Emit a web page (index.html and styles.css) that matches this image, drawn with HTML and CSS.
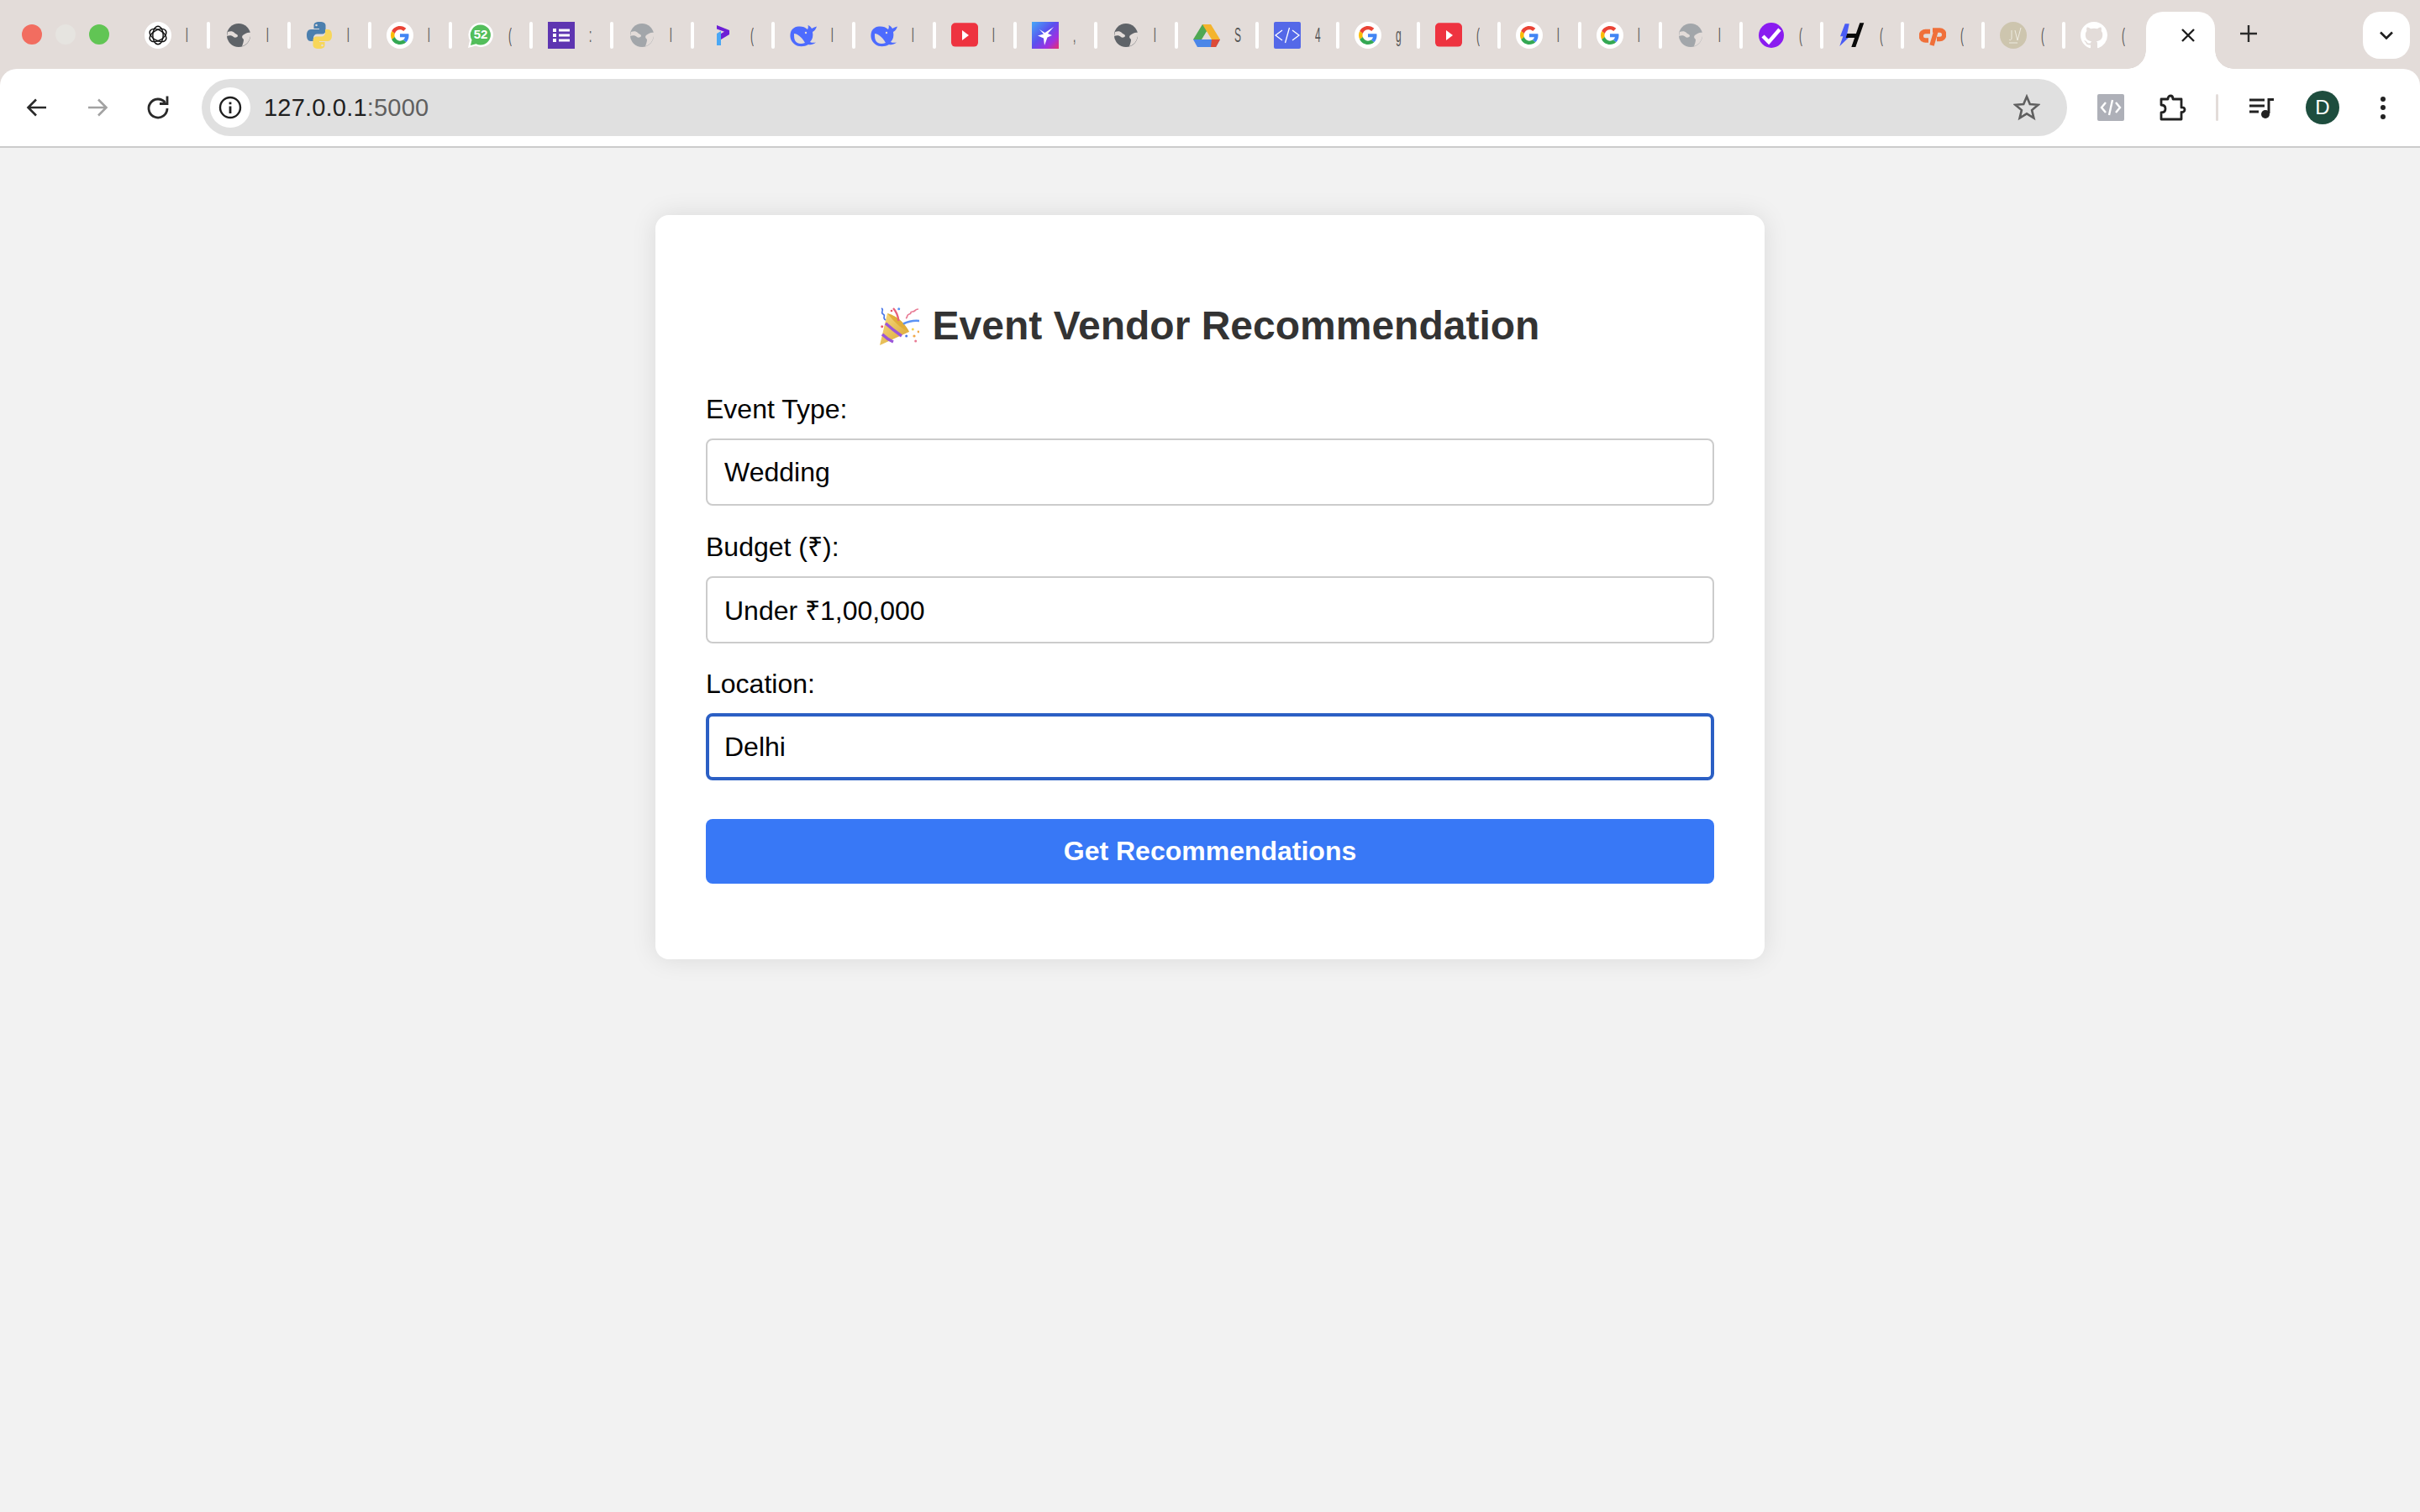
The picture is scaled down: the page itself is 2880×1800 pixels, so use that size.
FILE: index.html
```html
<!DOCTYPE html>
<html lang="en">
<head>
<meta charset="utf-8">
<title>Event Vendor Recommendation</title>
<link rel="stylesheet" href="styles.css">
</head>
<body>
<svg class="defs" aria-hidden="true">
  <defs>
    <linearGradient id="starbg" x1="0" y1="0" x2="1" y2="1"><stop offset="0" stop-color="#45a8f8"/><stop offset=".45" stop-color="#5a50ee"/><stop offset=".75" stop-color="#a02fe0"/><stop offset="1" stop-color="#e8306a"/></linearGradient>
    <linearGradient id="cone" x1="0" y1="0" x2="1" y2="1"><stop offset="0" stop-color="#f8dc80"/><stop offset="1" stop-color="#d8a332"/></linearGradient>
    <symbol id="i-openai" viewBox="0 0 32 32">
      <circle cx="16" cy="16" r="16" fill="#fff"/>
      <g fill="none" stroke="#111" stroke-width="1.400">
        <ellipse cx="16" cy="16" rx="6.200" ry="10.800"/>
        <ellipse cx="16" cy="16" rx="6.200" ry="10.800" transform="rotate(60 16 16)"/>
        <ellipse cx="16" cy="16" rx="6.200" ry="10.800" transform="rotate(120 16 16)"/>
      </g>
    </symbol>
    <symbol id="i-globe" viewBox="0 0 32 32">
      <circle cx="16" cy="16" r="14" fill="currentColor"/>
      <path d="M3 12C6 11 9 11 11 13C12 15 15 14 15 17C14 19 11 19 10 18C8 16 5 16 2 17z" fill="#e3dcd9"/>
      <path d="M30 13C27 12 24 14 21 16C19 18 21 20 22 21C22 24 21 26 20 29C25 28 29 23 30 17z" fill="#e3dcd9"/>
    </symbol>
    <symbol id="i-python" viewBox="0 0 32 32">
      <path d="M16 0c-6 0-6.500 2.500-6.500 4.500V8H16v1H6C2.500 9 1 12 1 16s1.500 7 4.500 7H9v-4c0-2.500 2-4.500 4.500-4.500h6c2.500 0 4-2 4-4V4.500C23.500 2 22 0 16 0z" fill="#4b7fae"/>
      <circle cx="12.500" cy="4" r="1.300" fill="#e3dcd9"/>
      <path d="M16 32c6 0 6.500-2.500 6.500-4.500V24H16v-1h10c3.500 0 5-3 5-7s-1.500-7-4.500-7H23v4c0 2.500-2 4.500-4.500 4.500h-6c-2.500 0-4 2-4 4v6C8.500 30 10 32 16 32z" fill="#f7d65a"/>
      <circle cx="19.500" cy="28" r="1.300" fill="#e3dcd9"/>
    </symbol>
    <symbol id="i-google" viewBox="0 0 32 32">
      <circle cx="16" cy="16" r="16" fill="#fff"/>
      <g transform="translate(5 5) scale(.458)">
        <path fill="#EA4335" d="M24 9.500c3.540 0 6.710 1.220 9.210 3.600l6.850-6.850C35.900 2.380 30.470 0 24 0 14.620 0 6.510 5.380 2.560 13.220l7.980 6.190C12.430 13.720 17.740 9.500 24 9.500z"/>
        <path fill="#4285F4" d="M46.980 24.550c0-1.570-.15-3.090-.38-4.550H24v9.020h12.940c-.58 2.960-2.260 5.480-4.780 7.180l7.730 6c4.510-4.180 7.090-10.360 7.090-17.650z"/>
        <path fill="#FBBC05" d="M10.530 28.590c-.48-1.450-.76-2.990-.76-4.590s.27-3.140.76-4.590l-7.980-6.190C.92 16.460 0 20.120 0 24c0 3.880.92 7.540 2.560 10.780l7.970-6.190z"/>
        <path fill="#34A853" d="M24 48c6.480 0 11.930-2.130 15.890-5.810l-7.730-6c-2.150 1.450-4.920 2.300-8.160 2.300-6.260 0-11.570-4.220-13.470-9.910l-7.980 6.190C6.510 42.620 14.620 48 24 48z"/>
      </g>
    </symbol>
    <symbol id="i-whatsapp" viewBox="0 0 32 32">
      <path d="M16 1a14.500 14.500 0 0 0-13 21L1 31l9-2.500A14.500 14.500 0 1 0 16 1z" fill="#fff"/>
      <path d="M16 3.500a12 12 0 0 0-10.500 18L4 28l6.500-1.800A12 12 0 1 0 16 3.500z" fill="#53be5b"/>
      <text x="16" y="20" class="wa-num">52</text>
    </symbol>
    <symbol id="i-forms" viewBox="0 0 32 32">
      <rect width="32" height="32" fill="#5e35b1"/>
      <path d="M6 8h4v4H6zM13 8.500h13v3H13zM6 14h4v4H6zM13 14.500h13v3H13zM6 20h4v4H6zM13 20.500h13v3H13z" fill="#fff"/>
    </symbol>
    <symbol id="i-p" viewBox="0 0 32 32">
      <path d="M9 14l5-3v17H9z" fill="#4aa8f5"/>
      <path d="M9 4l15 6v5l-10 6v-7l4-2.200L9 8.500z" fill="#6c1fd6"/>
    </symbol>
    <symbol id="i-whale" viewBox="0 0 32 32">
      <path d="M.5 15C1 9 5 6 10 5.500C14 5 18 6 21 9C22 7 22 6 21.500 4C24 5 25 6 26 8C28 7 30 6 32 5.500C31 9 29 11 27 12C28 17 27 21 24 24C26 25 29 25 31 24.500C28 27 25 27.500 22 27C17 30 10 30 6 27C2 24 0 20 .5 15z" fill="#4d6bfe"/>
      <path d="M5 14C9 14 14 18 18 25C13 27 8 26 6 22C5 20 5 17 5 14z" fill="#e3dcd9"/>
      <circle cx="19" cy="13" r="1.200" fill="#e3dcd9"/>
    </symbol>
    <symbol id="i-youtube" viewBox="0 0 32 32">
      <rect y="3" width="32" height="30" rx="5" transform="translate(0 -1.500) scale(1 .94)" fill="#ee3340"/>
      <path d="M13 10l8 6-8 6z" fill="#fff"/>
    </symbol>
    <symbol id="i-spark" viewBox="0 0 32 32">
      <rect width="32" height="32" fill="url(#starbg)"/>
      <path d="M26 6l-7 8 5 2-5.500 2.500L15 28l-1-8.500-7-3 7-2L9 9l6.500 4z" fill="#fff"/>
    </symbol>
    <symbol id="i-drive" viewBox="0 0 32 32">
      <path d="M11 3h10L10 21 0 21z" fill="#4fa853"/>
      <path d="M21 3l11 18H22L11 3z" fill="#f4b42d"/>
      <path d="M0 21h32l-5 9H5z" fill="#4a86e8"/>
      <path d="M22 21h10l-5 9h-6z" fill="#dd4b37"/>
    </symbol>
    <symbol id="i-code" viewBox="0 0 32 32">
      <rect width="32" height="32" rx="2" fill="#5468e8"/>
      <path d="M10 10l-8 6 8 6M22 10l8 6-8 6M18.500 7l-5 18" fill="none" stroke="#fff" stroke-width="1.300"/>
    </symbol>
    <symbol id="i-check" viewBox="0 0 32 32">
      <circle cx="16" cy="16" r="15" fill="#8a1cf0"/>
      <path d="M6 17l7 7L26 9" fill="none" stroke="#fff" stroke-width="4.500"/>
    </symbol>
    <symbol id="i-h" viewBox="0 0 32 32">
      <path d="M7.700 2.300h5l-2.400 11.700H17L1.300 29l4-11.700H2z" fill="#4a5cf5"/>
      <path d="M25.300 1.300h5L20.300 30h-5zM10.300 14h13.400L22 19H8.700z" fill="#0a0a0a"/>
    </symbol>
    <symbol id="i-cp" viewBox="0 0 32 32">
      <path d="M13 11.500H7.500a5 5 0 0 0 0 10.500H11" fill="none" stroke="#f0703a" stroke-width="5.500"/>
      <path d="M16 10h8.500a5 5 0 0 1 0 10.500h-3.500M20 11L15 28" fill="none" stroke="#f0703a" stroke-width="5.500"/>
    </symbol>
    <symbol id="i-jv" viewBox="0 0 32 32">
      <circle cx="16" cy="16" r="16" fill="#cdc5ae"/>
      <path d="M14 10v9c0 3-2 3-3 2M18 10l3 12 4-15M11 25h10" fill="none" stroke="#f2efe6" stroke-width=".9"/>
    </symbol>
    <symbol id="i-github" viewBox="0 0 16 16">
      <path fill="#fff" d="M8 0C3.580 0 0 3.580 0 8c0 3.540 2.290 6.530 5.470 7.590.4.07.55-.17.55-.38 0-.19-.01-.82-.01-1.490-2.010.37-2.530-.49-2.690-.94-.09-.23-.48-.94-.82-1.130-.28-.15-.68-.52-.01-.53.63-.01 1.080.58 1.230.82.72 1.210 1.870.87 2.330.66.07-.52.28-.87.51-1.070-1.780-.2-3.640-.89-3.640-3.950 0-.87.31-1.590.82-2.150-.08-.2-.36-1.020.08-2.120 0 0 .67-.21 2.200.82.64-.18 1.320-.27 2-.27.68 0 1.360.09 2 .27 1.530-1.040 2.200-.82 2.200-.82.44 1.100.16 1.920.08 2.120.51.56.82 1.270.82 2.150 0 3.070-1.870 3.750-3.650 3.950.29.25.54.73.54 1.480 0 1.070-.01 1.930-.01 2.200 0 .21.15.46.55.38A8.013 8.013 0 0 0 16 8c0-4.420-3.580-8-8-8z"/>
    </symbol>
  </defs>
</svg>

<header class="browser">
  <div class="tabstrip">
    <div class="lights">
      <span class="light light-red"></span>
      <span class="light light-idle"></span>
      <span class="light light-green"></span>
    </div>
    <div class="tabs">
      <div class="tab"><svg class="fav"><use href="#i-openai"/></svg><span class="tab-title">l</span><span class="sep"></span></div>
      <div class="tab"><svg class="fav globe-dark"><use href="#i-globe"/></svg><span class="tab-title">l</span><span class="sep"></span></div>
      <div class="tab"><svg class="fav"><use href="#i-python"/></svg><span class="tab-title">l</span><span class="sep"></span></div>
      <div class="tab"><svg class="fav"><use href="#i-google"/></svg><span class="tab-title">l</span><span class="sep"></span></div>
      <div class="tab"><svg class="fav"><use href="#i-whatsapp"/></svg><span class="tab-title">(</span><span class="sep"></span></div>
      <div class="tab"><svg class="fav"><use href="#i-forms"/></svg><span class="tab-title">:</span><span class="sep"></span></div>
      <div class="tab"><svg class="fav globe-light"><use href="#i-globe"/></svg><span class="tab-title">l</span><span class="sep"></span></div>
      <div class="tab"><svg class="fav"><use href="#i-p"/></svg><span class="tab-title">(</span><span class="sep"></span></div>
      <div class="tab"><svg class="fav"><use href="#i-whale"/></svg><span class="tab-title">l</span><span class="sep"></span></div>
      <div class="tab"><svg class="fav"><use href="#i-whale"/></svg><span class="tab-title">l</span><span class="sep"></span></div>
      <div class="tab"><svg class="fav"><use href="#i-youtube"/></svg><span class="tab-title">l</span><span class="sep"></span></div>
      <div class="tab"><svg class="fav"><use href="#i-spark"/></svg><span class="tab-title">,</span><span class="sep"></span></div>
      <div class="tab"><svg class="fav globe-dark"><use href="#i-globe"/></svg><span class="tab-title">l</span><span class="sep"></span></div>
      <div class="tab"><svg class="fav"><use href="#i-drive"/></svg><span class="tab-title">S</span><span class="sep"></span></div>
      <div class="tab"><svg class="fav"><use href="#i-code"/></svg><span class="tab-title">4</span><span class="sep"></span></div>
      <div class="tab"><svg class="fav"><use href="#i-google"/></svg><span class="tab-title">g</span><span class="sep"></span></div>
      <div class="tab"><svg class="fav"><use href="#i-youtube"/></svg><span class="tab-title">(</span><span class="sep"></span></div>
      <div class="tab"><svg class="fav"><use href="#i-google"/></svg><span class="tab-title">l</span><span class="sep"></span></div>
      <div class="tab"><svg class="fav"><use href="#i-google"/></svg><span class="tab-title">l</span><span class="sep"></span></div>
      <div class="tab"><svg class="fav globe-light"><use href="#i-globe"/></svg><span class="tab-title">l</span><span class="sep"></span></div>
      <div class="tab"><svg class="fav"><use href="#i-check"/></svg><span class="tab-title">(</span><span class="sep"></span></div>
      <div class="tab"><svg class="fav"><use href="#i-h"/></svg><span class="tab-title">(</span><span class="sep"></span></div>
      <div class="tab"><svg class="fav"><use href="#i-cp"/></svg><span class="tab-title">(</span><span class="sep"></span></div>
      <div class="tab"><svg class="fav"><use href="#i-jv"/></svg><span class="tab-title">(</span><span class="sep"></span></div>
      <div class="tab tab-last"><svg class="fav"><use href="#i-github"/></svg><span class="tab-title">(</span></div>
    </div>
    <div class="tab-active">
      <svg class="close-icon" viewBox="0 0 16 16"><path d="M1 1l14 14M15 1L1 15" fill="none" stroke="#1f1f1f" stroke-width="2.400"/></svg>
    </div>
    <svg class="plus-icon" viewBox="0 0 20 20"><path d="M10 0v20M0 10h20" fill="none" stroke="#2a2a2a" stroke-width="2.400"/></svg>
    <div class="tab-search">
      <svg class="chevron-icon" viewBox="0 0 16 10"><path d="M1 1.500l7 7 7-7" fill="none" stroke="#1f1f1f" stroke-width="2.600"/></svg>
    </div>
  </div>

  <div class="toolbar">
    <svg class="tool" viewBox="0 0 32 32"><path d="M27 16H6M15 6.500L5.500 16l9.500 9.500" fill="none" stroke="#2a2a2a" stroke-width="2.600"/></svg>
    <svg class="tool" viewBox="0 0 32 32"><path d="M5 16h21M17 6.500l9.500 9.500-9.500 9.500" fill="none" stroke="#a2a2a2" stroke-width="2.600"/></svg>
    <svg class="tool" viewBox="0 0 32 32"><path d="M24.500 10a11 11 0 1 0 2.500 7" fill="none" stroke="#2a2a2a" stroke-width="2.800"/><path d="M18 11.500h9v-9" fill="none" stroke="#2a2a2a" stroke-width="2.800"/></svg>
    <div class="omnibox">
      <span class="site-info">
        <svg class="info-icon" viewBox="0 0 28 28"><circle cx="14" cy="14" r="12" fill="none" stroke="#1f1f1f" stroke-width="2.400"/><path d="M12.600 12.500h2.800V21h-2.800zM12.600 7.500h2.800v2.800h-2.800z" fill="#1f1f1f"/></svg>
      </span>
      <span class="url">127.0.0.1<span class="url-port">:5000</span></span>
      <svg class="star-icon" viewBox="0 0 32 32"><path d="M16 3l3.800 9 9.700.8-7.400 6.300 2.300 9.500L16 23.400l-8.400 5.200 2.300-9.500-7.400-6.300 9.700-.8z" fill="none" stroke="#5f5f5f" stroke-width="2.600"/></svg>
    </div>
    <svg class="tool ext-code" viewBox="0 0 32 32"><rect width="32" height="32" rx="2" fill="#aeb0b8"/><path d="M10 10l-5 6 5 6M22 10l5 6-5 6M18 7l-4 18" fill="none" stroke="#fff" stroke-width="2.400"/></svg>
    <svg class="tool ext-puzzle" viewBox="0 0 32 32"><path d="M2 6h8c0-2 1-4 3-4s3 2 3 4h10v10c2-.5 4 .5 4 2.500S28 22 26 21.500V30H2v-8c3 0 5-1.500 5-4.500S5 13 2 13z" fill="none" stroke="#222" stroke-width="2.800" stroke-linejoin="round"/></svg>
    <span class="tool-sep"></span>
    <svg class="tool ext-media" viewBox="0 0 32 32"><path d="M1 7h18M1 14h18M1 21h11" fill="none" stroke="#222" stroke-width="2.800"/><path d="M24 5v18" fill="none" stroke="#222" stroke-width="3"/><path d="M24 5h6v3h-6z" fill="#222"/><circle cx="20" cy="24" r="5" fill="#222"/></svg>
    <span class="avatar">D</span>
    <svg class="tool kebab" viewBox="0 0 32 32"><circle cx="16" cy="6" r="3" fill="#222"/><circle cx="16" cy="16" r="3" fill="#222"/><circle cx="16" cy="27" r="3" fill="#222"/></svg>
  </div>
</header>

<main class="page">
  <section class="card">
    <h1 class="title">
      <svg class="popper" viewBox="0 0 48 48">
        <path d="M1 47L10 9Q26 13 36 31z" fill="url(#cone)"/>
        <path d="M10 9Q27 14 36 31Q24 27 10 9z" fill="#e0ad3a"/>
        <path d="M8 21Q17 29 27 36" fill="none" stroke="#9a55d8" stroke-width="3.400"/>
        <path d="M4 34Q10 40 17 43" fill="none" stroke="#9a55d8" stroke-width="3.400"/>
        <path d="M29 21.500Q38 17 48.500 18" fill="none" stroke="#5a93f5" stroke-width="2.600"/>
        <path d="M17 3Q22 8 23.500 18" fill="none" stroke="#e8607a" stroke-width="2.400"/>
        <path d="M3 3c4 2-2 5 2 7s-2 4 3 7" fill="none" stroke="#4a77e8" stroke-width="1.600"/>
        <path d="M32 15c3-1 0-4 4-5s0-3 4-3 2-3 7-3" fill="none" stroke="#e87a94" stroke-width="1.700"/>
        <circle cx="23.700" cy="3.700" r="1.500" fill="#5a93f5"/>
        <circle cx="3.700" cy="24.700" r="1.500" fill="#e8556a"/>
        <circle cx="40.300" cy="28" r="1.500" fill="#f3d34f"/>
        <circle cx="47" cy="31" r="1.400" fill="#f0a94b"/>
        <circle cx="42" cy="36" r="1.600" fill="#f0a94b"/>
        <circle cx="32.700" cy="36" r="1.500" fill="#4a77e8"/>
        <circle cx="43.700" cy="42" r="1.500" fill="#e87a94"/>
        <circle cx="15" cy="6" r="1.300" fill="#e8556a"/>
      </svg>
      <span>Event Vendor Recommendation</span>
    </h1>
    <form class="form">
      <div class="field">
        <div class="label">Event Type:</div>
        <div class="input">Wedding</div>
      </div>
      <div class="field">
        <div class="label">Budget (₹):</div>
        <div class="input">Under ₹1,00,000</div>
      </div>
      <div class="field">
        <div class="label">Location:</div>
        <div class="input input-focus">Delhi</div>
      </div>
      <button class="submit" type="button">Get Recommendations</button>
    </form>
  </section>
</main>
</body>
</html>
```

FILE: styles.css
```css
* { box-sizing: border-box; }

html, body { margin: 0; padding: 0; }

body {
  min-height: 100vh;
  display: flex;
  flex-direction: column;
  background: #f2f2f2;
  font-family: "Liberation Sans", Arial, sans-serif;
  color: #000;
}

.defs { display: block; width: 0; height: 0; overflow: hidden; }

/* Browser chrome */
.browser { background: #e3dcd9; flex: none; }

.tabstrip { display: flex; height: 82px; }

.lights { display: flex; gap: 16px; padding: 29px 0 0 26px; }
.light { width: 24px; height: 24px; border-radius: 50%; }
.light-red { background: #f26d60; }
.light-idle { background: #e6e4e0; }
.light-green { background: #61c554; }

.tabs { display: flex; margin-left: 22px; padding-top: 26px; }

.tab {
  width: 96px;
  height: 32px;
  display: flex;
  align-items: center;
  padding-left: 20px;
}
.tab-last { width: 98px; }

.fav { width: 32px; height: 32px; flex: none; }
.globe-dark { color: #5f6368; }
.globe-light { color: #a2a6aa; }
.wa-num { font: bold 15px "Liberation Sans", sans-serif; fill: #fff; text-anchor: middle; }

.tab-title {
  width: 8px;
  margin-left: 17px;
  flex: none;
  font-size: 24px;
  line-height: 32px;
  color: #555;
  transform: scaleX(.5);
  transform-origin: left center;
}

.sep { width: 4px; height: 32px; margin-left: auto; margin-right: -2px; border-radius: 2px; background: #fff; }

.tab-active {
  position: relative;
  width: 82px;
  height: 68px;
  margin-top: 14px;
  display: flex;
  justify-content: flex-end;
  padding: 20px 24px 0 0;
  background: #fff;
  border-radius: 20px 20px 0 0;
}
.tab-active::before,
.tab-active::after {
  content: "";
  position: absolute;
  bottom: 0;
  width: 22px;
  height: 22px;
}
.tab-active::before { left: -22px; background: radial-gradient(circle at 0 0, transparent 21.5px, #fff 22px); }
.tab-active::after { right: -22px; background: radial-gradient(circle at 100% 0, transparent 21.5px, #fff 22px); }

.close-icon { width: 16px; height: 16px; }
.plus-icon { width: 20px; height: 20px; margin: 30px 0 0 30px; flex: none; }

.tab-search {
  width: 56px;
  height: 56px;
  margin: 14px 12px 0 auto;
  display: flex;
  align-items: center;
  justify-content: center;
  background: #fff;
  border-radius: 20px;
}
.chevron-icon { width: 16px; height: 10px; }

.toolbar {
  height: 94px;
  display: flex;
  align-items: center;
  padding: 0 28px;
  gap: 40px;
  background: #fff;
  border-bottom: 2px solid #ccc;
  border-radius: 20px 20px 0 0;
}

.tool { width: 32px; height: 32px; flex: none; }

.omnibox {
  flex: 1;
  height: 68px;
  margin: 0 -4px;
  display: flex;
  align-items: center;
  padding: 0 32px 0 10px;
  background: #e0e0e0;
  border-radius: 34px;
}
.site-info {
  width: 48px;
  height: 48px;
  flex: none;
  display: flex;
  align-items: center;
  justify-content: center;
  background: #fff;
  border-radius: 50%;
}
.info-icon { width: 28px; height: 28px; }
.url { margin-left: 16px; margin-right: auto; font: 29px "Liberation Sans", sans-serif; letter-spacing: .2px; color: #1f1f1f; }
.url-port { color: #5f5f5f; }
.star-icon { width: 32px; height: 32px; flex: none; }

.ext-puzzle { margin-left: 2px; }
.tool-sep { width: 3px; height: 32px; flex: none; margin: 0 -4px 0 -5px; background: #e3dcd9; border-radius: 2px; }
.ext-media { margin-right: -4px; }
.avatar {
  width: 40px;
  height: 40px;
  flex: none;
  margin-right: -4px;
  display: flex;
  align-items: center;
  justify-content: center;
  border-radius: 50%;
  background: #1e4d3e;
  color: #fff;
  font-size: 24px;
}

/* Page content */
.page { flex: 1; padding-top: 80px; display: flex; justify-content: center; align-items: flex-start; }

.card {
  width: 1320px;
  padding: 104px 60px 90px;
  background: #fff;
  border-radius: 16px;
  box-shadow: 0 0 30px rgba(0, 0, 0, .1);
}

.title {
  margin: 0 0 54px;
  padding-right: 2px;
  display: flex;
  align-items: center;
  justify-content: center;
  gap: 16px;
  height: 55px;
  font-size: 48px;
  font-weight: 700;
  color: #333;
}
.popper { width: 48px; height: 48px; flex: none; }

.form { display: flex; flex-direction: column; }

.field { margin-bottom: 30.5px; }
.field:last-of-type { margin-bottom: 46px; }

.label { font-size: 32px; line-height: 37px; margin-bottom: 16px; }

.input {
  height: 80px;
  display: flex;
  align-items: center;
  padding: 0 20px;
  border: 2px solid #ccc;
  border-radius: 8px;
  background: #fff;
  font-size: 32px;
}
.input-focus { border: 4px solid #2b5fc4; padding: 0 18px; }

.submit {
  height: 77px;
  display: block;
  width: 100%;
  border: 0;
  border-radius: 8px;
  background: #3878f6;
  color: #fff;
  font: 700 32px "Liberation Sans", sans-serif;
}
```
